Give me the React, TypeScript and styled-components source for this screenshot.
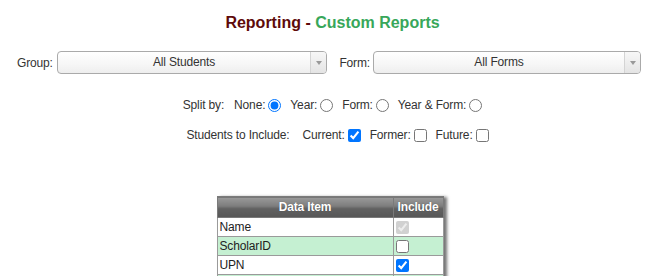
import React from 'react'
import styled, { createGlobalStyle } from 'styled-components'

const GlobalStyle = createGlobalStyle`
  body {
    margin: 0;
    background: #fff;
    font-family: "Liberation Sans", Arial, sans-serif;
    color: #333;
  }
`

const Page = styled.div`
  width: 665px;
  height: 276px;
  overflow: hidden;
  padding-top: 14px;
  box-sizing: border-box;
  letter-spacing: -0.15px;
`
const Title = styled.h2`
  margin: 0;
  font-size: 16px;
  line-height: 18px;
  font-weight: bold;
  text-align: center;
  letter-spacing: 0;
  color: #5e0a0a;
`
const TitleAccent = styled.span`
  color: #38a75a;
`
const SelectRow = styled.div`
  display: grid;
  grid-template-columns: 40px 270px 46px 268px;
  align-items: center;
  margin-top: 19px;
  padding-left: 17px;
`
const FieldLabel = styled.label<{ $right?: boolean }>`
  font-size: 12px;
  text-align: ${(p) => (p.$right ? 'right' : 'left')};
  padding-right: ${(p) => (p.$right ? 3 : 0)}px;
`
const SelectBox = styled.div`
  display: flex;
  height: 23px;
  box-sizing: border-box;
  border: 1px solid #aaa;
  border-radius: 4px;
  background: linear-gradient(#ffffff 0%, #f6f6f6 60%, #eeeeee 100%);
  overflow: hidden;
`
const SelectValue = styled.span`
  flex: 1;
  font-size: 12px;
  line-height: 21px;
  text-align: center;
  color: #333;
`
const SelectArrow = styled.span`
  width: 15px;
  border-left: 1px solid #d4d4d4;
  background: linear-gradient(#f7f7f7, #e4e4e4);
  display: flex;
  align-items: center;
  justify-content: center;
  &::after {
    content: '';
    border-left: 3px solid transparent;
    border-right: 3px solid transparent;
    border-top: 4px solid #999;
    margin-top: 1px;
  }
`
const OptionRow = styled.div<{ $top: number; $shift: number }>`
  display: flex;
  justify-content: center;
  align-items: center;
  gap: 9px;
  height: 20px;
  margin-top: ${(p) => p.$top}px;
  font-size: 12px;
  padding-left: ${(p) => p.$shift}px;
`
const RowLabel = styled.span<{ $mr: number }>`
  margin-right: ${(p) => p.$mr}px;
`
const Option = styled.label`
  display: flex;
  align-items: center;
`
const Toggle = styled.input`
  width: 13px;
  height: 13px;
  margin: 0 0 0 3px;
`
const TableWrap = styled.div`
  display: flex;
  justify-content: center;
  padding-right: 5px;
  margin-top: 51px;
`
const Table = styled.table`
  width: 227px;
  border-collapse: collapse;
  font-size: 12px;
  box-shadow: 3px 1px 3px rgba(0, 0, 0, 0.55);
`
const HeadCell = styled.th<{ $w?: number }>`
  height: 20px;
  padding: 0;
  width: ${(p) => (p.$w ? `${p.$w}px` : 'auto')};
  color: #fff;
  font-weight: bold;
  font-size: 12px;
  text-align: center;
  background: linear-gradient(#9a9a9a 0%, #7c7c7c 45%, #616161 55%, #575757 100%);
  border: 1px solid #7a7a7a;
  text-shadow: 0 0 1px rgba(0, 0, 0, 0.4);
`
const Row = styled.tr<{ $alt: boolean }>`
  background: ${(p) => (p.$alt ? '#c5f0d2' : '#fff')};
`
const Cell = styled.td`
  height: 18px;
  padding: 0 0 0 2px;
  border: 1px solid #9a9a9a;
  color: #222;
  font-size: 12px;
`
const CheckCell = styled.td`
  padding: 0 0 0 2px;
  border: 1px solid #9a9a9a;
  line-height: 0;
`
const CellCheck = styled.input`
  width: 13px;
  height: 13px;
  margin: 0;
  vertical-align: middle;
`

const items = [
  { name: 'Name', checked: true, disabled: true },
  { name: 'ScholarID', checked: false, disabled: false },
  { name: 'UPN', checked: true, disabled: false },
  { name: '', checked: false, disabled: false },
]

const App: React.FC = () => {
  return (
    <Page>
      <GlobalStyle />
      <Title>
        Reporting - <TitleAccent>Custom Reports</TitleAccent>
      </Title>
      <SelectRow>
        <FieldLabel>Group:</FieldLabel>
        <SelectBox>
          <SelectValue>All Students</SelectValue>
          <SelectArrow />
        </SelectBox>
        <FieldLabel $right>Form:</FieldLabel>
        <SelectBox>
          <SelectValue>All Forms</SelectValue>
          <SelectArrow />
        </SelectBox>
      </SelectRow>
      <OptionRow $top={21} $shift={0}>
        <RowLabel $mr={1}>Split by:</RowLabel>
        <Option>
          None:
          <Toggle type="radio" name="split" defaultChecked />
        </Option>
        <Option>
          Year:
          <Toggle type="radio" name="split" />
        </Option>
        <Option>
          Form:
          <Toggle type="radio" name="split" />
        </Option>
        <Option>
          Year &amp; Form:
          <Toggle type="radio" name="split" />
        </Option>
      </OptionRow>
      <OptionRow $top={10} $shift={10}>
        <RowLabel $mr={4}>Students to Include:</RowLabel>
        <Option>
          Current:
          <Toggle type="checkbox" defaultChecked />
        </Option>
        <Option>
          Former:
          <Toggle type="checkbox" />
        </Option>
        <Option>
          Future:
          <Toggle type="checkbox" />
        </Option>
      </OptionRow>
      <TableWrap>
        <Table>
          <thead>
            <tr>
              <HeadCell>Data Item</HeadCell>
              <HeadCell $w={49}>Include</HeadCell>
            </tr>
          </thead>
          <tbody>
            {items.map((it, i) => (
              <Row key={i} $alt={i % 2 === 1}>
                <Cell>{it.name || '\u00a0'}</Cell>
                <CheckCell>
                  <CellCheck type="checkbox" defaultChecked={it.checked} disabled={it.disabled} />
                </CheckCell>
              </Row>
            ))}
          </tbody>
        </Table>
      </TableWrap>
    </Page>
  )
}

export default App
